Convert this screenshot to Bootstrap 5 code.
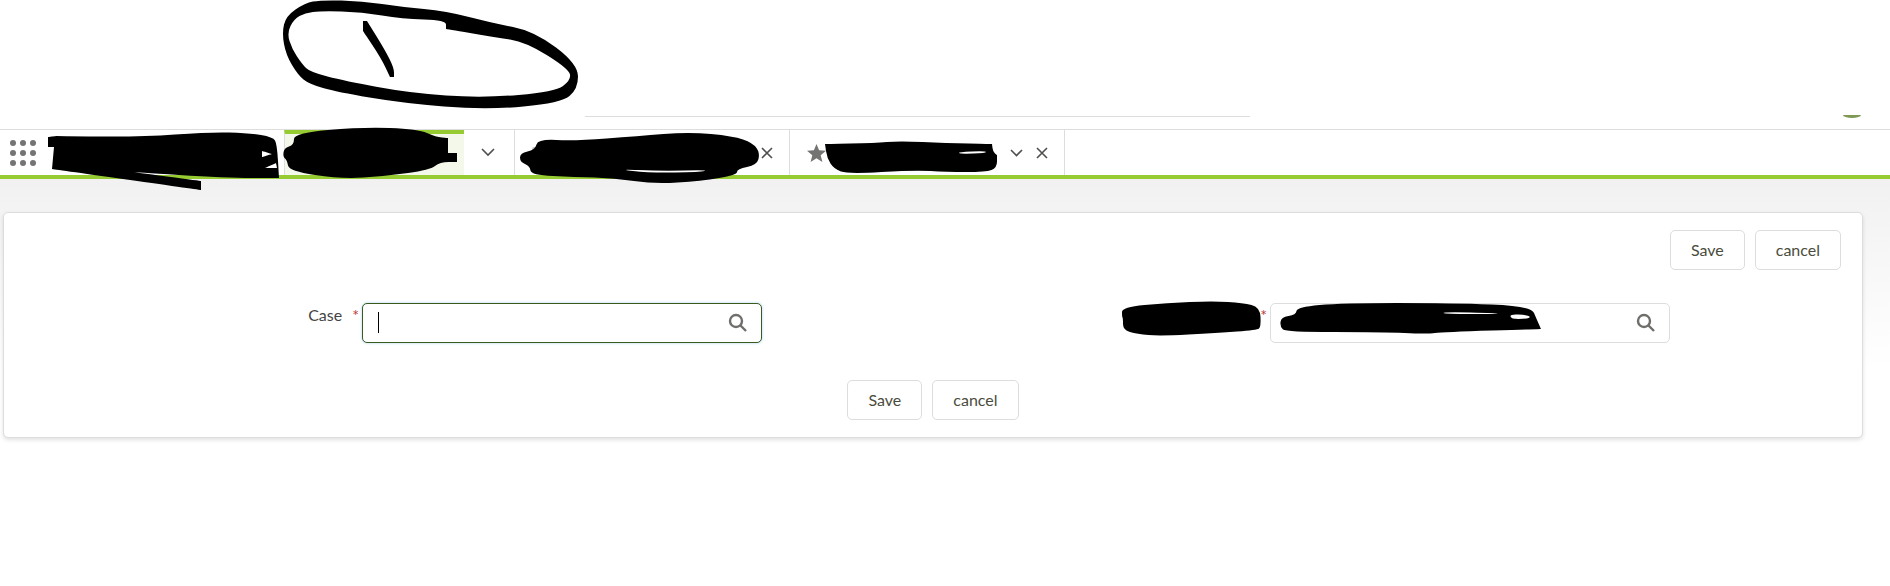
<!DOCTYPE html>
<html lang="en">
<head>
  <meta charset="UTF-8">
  <title>Case</title>
  <link href="https://cdn.jsdelivr.net/npm/bootstrap@5.3.0/dist/css/bootstrap.min.css" rel="stylesheet">
  <style>
    html, body { height: 100%; }
    body { font-family: Lato, "Liberation Sans", sans-serif; font-size: 16px; color: #444; background: #fff; overflow: hidden; }
    .top-head { height: 130px; padding-bottom: 11px; border-bottom: 1px solid #ddd; }
    .head-line { width: 665px; height: 1px; margin: 0 0 1px 585px; background: #ddd; }
    .head-avatar { width: 18px; height: 3px; margin-right: 29px; background: #7f9a55; border-radius: 0 0 50% 50% / 0 0 100% 100%; }
    .tab-bar { height: 49px; border-bottom: 4px solid #97cb32; }
    .tab-apps { width: 284px; padding-left: 10px; }
    .tab-active { width: 180px; background: #f4f8ea; border-left: 1px solid #ddd; border-top: 4px solid #97cb32; }
    .tab-more { width: 51px; padding-right: 2px; border-right: 1px solid #ddd; }
    .tab-two { width: 275px; padding: 0 16px 0 16px; border-right: 1px solid #ddd; }
    .tab-three { width: 275px; padding: 0 16px 0 17px; border-right: 1px solid #ddd; }
    .tab-chev { margin-right: 13px; }
    .page-main { padding: 33px 27px 0 3px; height: 407px; background: linear-gradient(#f1f1f1, #fff 190px); }
    .form-box { border: 1px solid #ddd; border-radius: 5px; box-shadow: 0 2px 4px rgba(0, 0, 0, .12); }
    .form-box-body { height: 224px; padding: 17px 21px 17px 0; }
    .act-btn { height: 40px; padding: 0 20px; font-size: 16px; line-height: 38px; color: #4a4c3c; background: #fff; border: 1px solid #ddd; border-radius: 5px; }
    .act-gap { gap: 10px; }
    .form-line { margin-top: 33px; }
    .label-one { width: 358px; padding: 0 3px 0 0; }
    .label-two { width: 508px; padding: 0 3px 0 0; }
    .req-mark { color: #c23934; font-size: 16px; }
    .case-text { margin-right: 10px; }
    .lookup { width: 400px; }
    .lookup .form-control { height: 40px; border: 1px solid #ddd; border-radius: 5px; box-shadow: none; }
    .lookup .field-on { border-color: #3b5b1e; box-shadow: 0 0 3px #a6d2ef; }
    .lookup-icon { position: absolute; right: 15px; top: 10px; }
    .fake-caret { position: absolute; left: 16px; top: 9px; width: 1px; height: 21px; background: #000; }
    .foot-line { margin: 37px 0 0 21px; }
    .scribble { position: absolute; left: 0; top: 0; pointer-events: none; }
  </style>
</head>
<body>
  <div class="top-head d-flex align-items-end">
    <div class="head-line"></div>
    <div class="head-avatar ms-auto"></div>
  </div>

  <div class="tab-bar d-flex">
    <div class="tab-apps d-flex align-items-center">
      <svg width="26" height="26" viewBox="0 0 26 26" fill="#747474">
        <circle cx="3" cy="3" r="3"/><circle cx="13" cy="3" r="3"/><circle cx="23" cy="3" r="3"/>
        <circle cx="3" cy="13" r="3"/><circle cx="13" cy="13" r="3"/><circle cx="23" cy="13" r="3"/>
        <circle cx="3" cy="23" r="3"/><circle cx="13" cy="23" r="3"/><circle cx="23" cy="23" r="3"/>
      </svg>
    </div>
    <div class="tab-active"></div>
    <div class="tab-more d-flex align-items-center justify-content-center">
      <svg width="14" height="9" viewBox="0 0 14 9" fill="none" stroke="#514f4d" stroke-width="1.6"><path d="M1 1l6 6 6-6"/></svg>
    </div>
    <div class="tab-two d-flex align-items-center justify-content-between">
      <svg width="14" height="14" viewBox="0 0 14 14" fill="#c9c9c9"><rect x="1" y="1" width="12" height="12" rx="2"/></svg>
      <svg width="12" height="12" viewBox="0 0 12 12" fill="none" stroke="#514f4d" stroke-width="1.6"><path d="M1 1l10 10M11 1L1 11"/></svg>
    </div>
    <div class="tab-three d-flex align-items-center">
      <svg width="19" height="18" viewBox="0 0 19 18" fill="#747472"><path d="M9.5 0l2.6 6.3 6.9.5-5.3 4.4 1.7 6.8-5.9-3.7-5.9 3.7 1.7-6.8L0 6.8l6.9-.5z"/></svg>
      <svg class="ms-auto tab-chev" width="13" height="8" viewBox="0 0 13 8" fill="none" stroke="#514f4d" stroke-width="1.6"><path d="M1 1l5.5 5.5L12 1"/></svg>
      <svg width="12" height="12" viewBox="0 0 12 12" fill="none" stroke="#514f4d" stroke-width="1.6"><path d="M1 1l10 10M11 1L1 11"/></svg>
    </div>
  </div>

  <div class="page-main">
    <div class="card form-box">
      <div class="card-body form-box-body">
        <div class="d-flex justify-content-end act-gap">
          <button class="btn act-btn" type="button">Save</button>
          <button class="btn act-btn" type="button">cancel</button>
        </div>
        <div class="d-flex form-line">
          <label class="label-one d-flex justify-content-end">
            <span class="case-text">Case</span><span class="req-mark">*</span>
          </label>
          <div class="lookup position-relative">
            <input class="form-control field-on" type="text" aria-label="Case">
            <span class="fake-caret"></span>
            <svg class="lookup-icon" width="19" height="19" viewBox="0 0 19 19" fill="none" stroke="#706e6b" stroke-width="2.4"><circle cx="8" cy="8" r="6"/><path d="M12.5 12.5L18 18"/></svg>
          </div>
          <label class="label-two d-flex justify-content-end">
            <span class="req-mark">*</span>
          </label>
          <div class="lookup position-relative">
            <input class="form-control" type="text" aria-label="Lookup">
            <svg class="lookup-icon" width="19" height="19" viewBox="0 0 19 19" fill="none" stroke="#706e6b" stroke-width="2.4"><circle cx="8" cy="8" r="6"/><path d="M12.5 12.5L18 18"/></svg>
          </div>
        </div>
        <div class="d-flex justify-content-center act-gap foot-line">
          <button class="btn act-btn" type="button">Save</button>
          <button class="btn act-btn" type="button">cancel</button>
        </div>
      </div>
    </div>
  </div>

  <!-- marker redactions drawn over the screenshot -->
  <svg class="scribble" id="marker" width="1890" height="586" viewBox="0 0 1890 586"></svg>

  <script src="https://cdn.jsdelivr.net/npm/bootstrap@5.3.0/dist/js/bootstrap.bundle.min.js"></script>
  <script>
    // x,y outlines of the marker strokes; a point given twice stays a sharp corner
    const loopOuter = [321,0, 362,1, 402,7, 446,11, 492,23, 534,31, 578,64, 578,89, 561,103, 486,110, 402,103, 337,92, 309,84, 298,75, 286,55, 282,33, 286,16, 305,3];
    const loopInner = [321,11, 362,12, 402,19, 446,20, 446,29, 446,29, 494,37, 526,42, 569,69, 571,80, 555,92, 482,98, 410,93, 345,81, 310,72, 302,64, 292,49, 287,33, 294,19, 305,13];
    const blobs = [
      [363,21, 363,21, 367,21, 367,21, 385,50, 394,68, 394,77, 394,77, 390,77, 390,77, 381,58, 363,31, 363,31],
      [48,137, 48,137, 56,136, 56,136, 141,137, 209,132, 249,133, 273,137, 277,144, 279,178, 279,178, 225,178, 133,172, 133,172, 201,181, 201,181, 201,190, 201,190, 52,169, 52,169, 54,147, 54,147, 48,147, 48,147],
      [294,133, 362,127, 418,129, 436,137, 448,138, 448,138, 448,153, 448,153, 457,153, 457,153, 457,162, 457,162, 440,162, 430,170, 386,176, 341,179, 289,171, 287,160, 283,157, 284,148, 294,145],
      [538,139, 575,141, 638,136, 689,132, 733,136, 753,143, 760,153, 757,165, 737,169, 737,175, 701,181, 654,184, 614,178, 575,177, 531,175, 530,166, 520,162, 520,153, 535,150],
      [825,144, 825,144, 875,143, 899,141, 946,143, 992,144, 992,144, 993,152, 997,155, 997,155, 997,168, 986,172, 946,172, 915,170, 848,174, 834,169, 827,158],
      [1122,307, 1167,303, 1213,301, 1243,303, 1260,307, 1261,327, 1257,330, 1217,333, 1160,336, 1137,334, 1123,330, 1123,318, 1122,317],
      [1281,317, 1296,315, 1297,307, 1342,303, 1452,303, 1531,306, 1537,320, 1541,329, 1541,329, 1443,332, 1427,334, 1382,332, 1286,332, 1280,327]
    ];
    const slivers = [
      [262,151, 262,151, 272,154, 272,154, 262,157, 262,157],
      [265,168, 265,168, 276,163, 276,163, 277,168, 277,168],
      [616,169, 660,171, 709,170, 700,172, 650,173],
      [958,152, 986,151, 986,153, 960,154],
      [1442,312, 1498,313, 1498,314, 1445,314],
      [1510,314, 1526,315, 1531,317, 1526,319, 1511,319]
    ];

    // closed curve through the midpoints of the outline
    function curva(p) {
      const n = p.length / 2;
      const mid = i => [(p[2 * (i % n)] + p[2 * ((i + 1) % n)]) / 2, (p[2 * (i % n) + 1] + p[2 * ((i + 1) % n) + 1]) / 2];
      let d = "M" + mid(n - 1).join(" ");
      for (let i = 0; i < n; i++) {
        d += "Q" + p[2 * i] + " " + p[2 * i + 1] + " " + mid(i).join(" ");
      }
      return d + "Z";
    }

    let html = `<path fill="#000" fill-rule="evenodd" d="${curva(loopOuter)}${curva(loopInner)}"/>`;
    blobs.forEach(b => { html += `<path fill="#000" d="${curva(b)}"/>`; });
    slivers.forEach(s => { html += `<path fill="#fff" d="${curva(s)}"/>`; });
    document.getElementById("marker").innerHTML = html;
  </script>
</body>
</html>
